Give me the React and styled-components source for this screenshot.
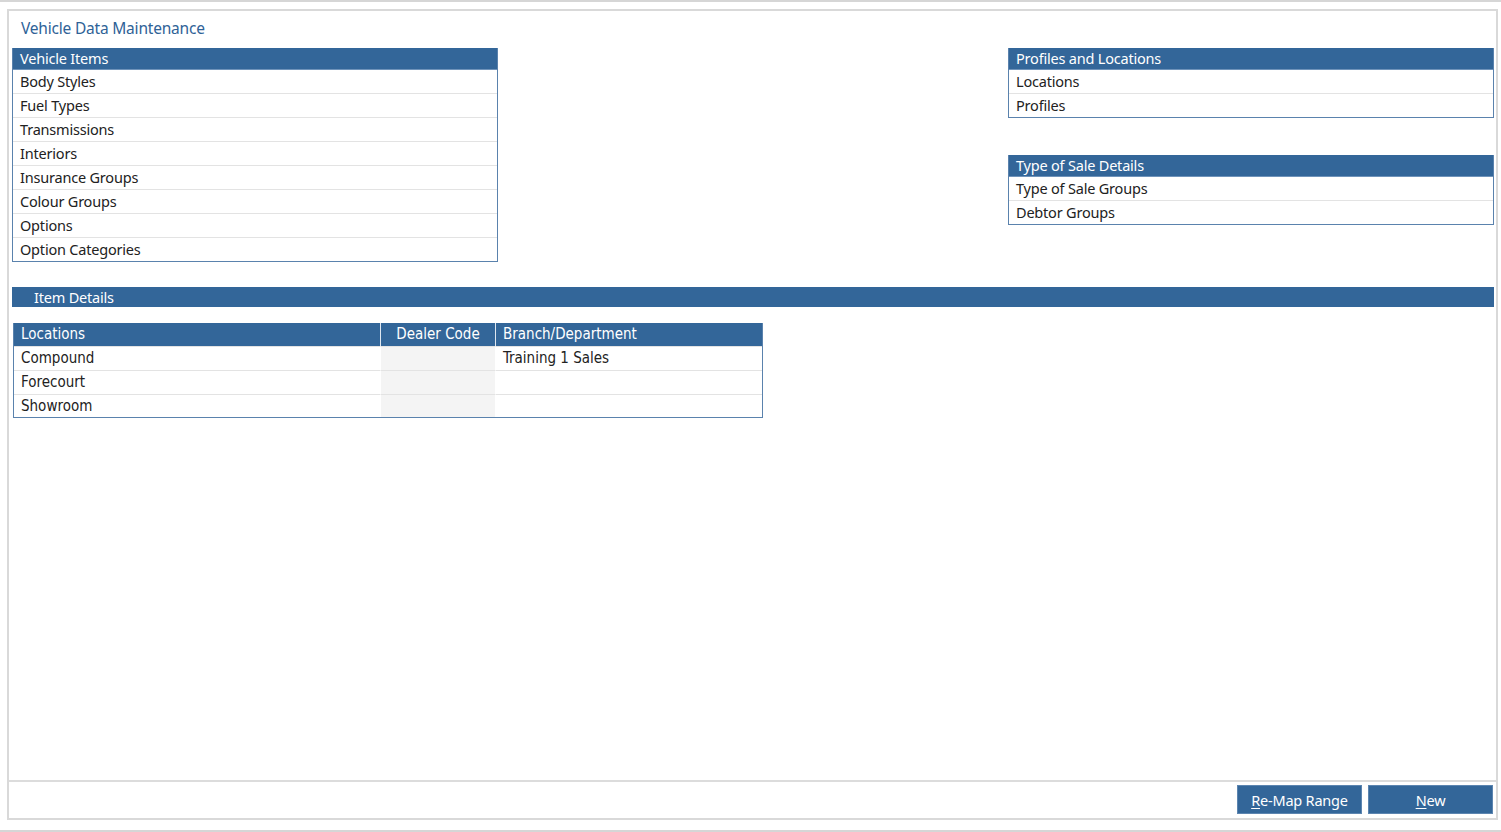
import React from 'react';
import styled, { createGlobalStyle } from 'styled-components';

const BLUE = '#336699';

const GlobalStyle = createGlobalStyle`
  html, body {
    margin: 0;
    padding: 0;
    background: #ffffff;
  }
  body {
    font-family: "Noto Sans", "DejaVu Sans", sans-serif;
    color: #222;
  }
  * { box-sizing: border-box; }
`;

const Page = styled.div`
  width: 1501px;
  height: 832px;
  border-top: 2px solid #d6d6d6;
  border-bottom: 2px solid #d6d6d6;
  padding: 7px 3px 10px 7px;
  display: flex;
`;

const Frame = styled.div`
  flex: 1;
  border: 2px solid #d9d9d9;
  display: flex;
  flex-direction: column;
`;

const Content = styled.div`
  flex: 1;
  padding: 0 2px 0 3px;
  display: flex;
  flex-direction: column;
`;

const Title = styled.h1`
  margin: 0;
  padding: 6px 0 0 9px;
  height: 37px;
  font-size: 15.5px;
  font-weight: 400;
  color: #2f6297;
  letter-spacing: -0.2px;
`;

const TopRow = styled.div`
  display: flex;
  justify-content: space-between;
  align-items: flex-start;
`;

const SideColumn = styled.div`
  display: flex;
  flex-direction: column;
  gap: 37px;
`;

const Panel = styled.div`
  width: 486px;
  border: 1px solid #5a82ad;
  border-top: none;
`;

const PanelHeader = styled.div`
  height: 22px;
  background: ${BLUE};
  color: #fff;
  font-size: 14.5px;
  line-height: 21px;
  padding-left: 7px;
  border-bottom: 1px solid #6f93ba;
  letter-spacing: -0.2px;
`;

const PanelRow = styled.div`
  height: ${p => (p.$last ? 23 : 24)}px;
  line-height: 22px;
  font-size: 14.5px;
  padding-left: 7px;
  color: #222;
  border-bottom: ${p => (p.$last ? 'none' : '1px solid #e3e3e3')};
  letter-spacing: -0.2px;
`;

const SectionBar = styled.div`
  margin-top: 25px;
  height: 20px;
  background: ${BLUE};
  color: #fff;
  font-size: 14.5px;
  line-height: 20px;
  padding-left: 22px;
  letter-spacing: -0.2px;
`;

const Grid = styled.div`
  margin: 16px 0 0 1px;
  width: 750px;
  border: 1px solid #5a82ad;
  border-top: none;
  display: grid;
  grid-template-columns: 366px 115px 1fr;
  font-family: "Liberation Sans Narrow", "DejaVu Sans Condensed", "Roboto", sans-serif;
`;

const HeadCell = styled.div`
  height: 23px;
  background: ${BLUE};
  color: #fff;
  font-size: 15px;
  line-height: 22px;
  padding: 0 7px;
  text-align: ${p => p.$align || 'left'};
  border-left: ${p => (p.$first ? 'none' : '1px solid #dfe7f0')};
`;

const Cell = styled.div`
  height: ${p => (p.$last ? 23 : 24)}px;
  line-height: 22px;
  font-size: 15px;
  padding: 0 7px;
  color: #222;
  background: ${p => (p.$shaded ? '#f4f4f4' : '#fff')};
  border-top: 1px solid #e3e3e3;
  border-left: ${p => (p.$first ? 'none' : '1px solid #ffffff')};
`;

const Footer = styled.div`
  height: 38px;
  border-top: 2px solid #dcdcdc;
  display: flex;
  justify-content: flex-end;
  align-items: flex-start;
  gap: 6px;
  padding: 3px 3px 0 0;
`;

const Button = styled.button`
  width: 125px;
  height: 29px;
  background: ${BLUE};
  color: #fff;
  border: 1px solid #5c85b0;
  font-family: "Noto Sans", "DejaVu Sans", sans-serif;
  font-size: 14.5px;
  letter-spacing: -0.2px;
  padding: 0;
  cursor: pointer;

  u { text-decoration: underline; text-underline-offset: 2px; }
`;

const vehicleItems = [
  'Body Styles',
  'Fuel Types',
  'Transmissions',
  'Interiors',
  'Insurance Groups',
  'Colour Groups',
  'Options',
  'Option Categories',
];

const locations = [
  { name: 'Compound', code: '', branch: 'Training 1 Sales' },
  { name: 'Forecourt', code: '', branch: '' },
  { name: 'Showroom', code: '', branch: '' },
];

function ListPanel({ title, items }) {
  return (
    <Panel>
      <PanelHeader>{title}</PanelHeader>
      {items.map((item, i) => (
        <PanelRow key={item} $last={i === items.length - 1}>{item}</PanelRow>
      ))}
    </Panel>
  );
}

export default function App() {
  return (
    <>
      <GlobalStyle />
      <Page>
        <Frame>
          <Content>
            <Title>Vehicle Data Maintenance</Title>
            <TopRow>
              <ListPanel title="Vehicle Items" items={vehicleItems} />
              <SideColumn>
                <ListPanel title="Profiles and Locations" items={['Locations', 'Profiles']} />
                <ListPanel title="Type of Sale Details" items={['Type of Sale Groups', 'Debtor Groups']} />
              </SideColumn>
            </TopRow>
            <SectionBar>Item Details</SectionBar>
            <Grid>
              <HeadCell $first>Locations</HeadCell>
              <HeadCell $align="center">Dealer Code</HeadCell>
              <HeadCell>Branch/Department</HeadCell>
              {locations.map((loc, i) => {
                const last = i === locations.length - 1;
                return (
                  <React.Fragment key={loc.name}>
                    <Cell $first $last={last}>{loc.name}</Cell>
                    <Cell $shaded $last={last}>{loc.code}</Cell>
                    <Cell $last={last}>{loc.branch}</Cell>
                  </React.Fragment>
                );
              })}
            </Grid>
          </Content>
          <Footer>
            <Button><u>R</u>e-Map Range</Button>
            <Button><u>N</u>ew</Button>
          </Footer>
        </Frame>
      </Page>
    </>
  );
}
